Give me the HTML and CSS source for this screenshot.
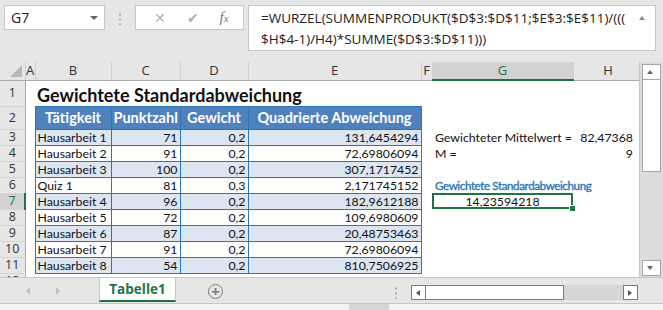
FILE: index.html
```html
<!DOCTYPE html>
<html lang="de">
  <head>
    <meta charset="UTF-8" />
    <title>Gewichtete Standardabweichung</title>
    <link rel="stylesheet" href="styles.css">
  </head>
  <body>
    <div class="topbar">
      <div class="namebox">
        <span>G7</span>
        <span class="caret"></span>
      </div>
      <div class="grip"></div>
      <div class="fxbox">
        <span class="fx-btn">&#x2715;</span>
        <span class="fx-btn">&#x2714;</span>
        <span class="fx-btn fx"><i>f</i><i class="x">x</i></span>
      </div>
      <div class="formula">
        <div class="formula-text">=WURZEL(SUMMENPRODUKT($D$3:$D$11;$E$3:$E$11)/(((<br>$H$4-1)/H4)*SUMME($D$3:$D$11)))</div>
        <span class="formula-up"></span>
      </div>
    </div>

    <div class="sheetwrap">
      <div class="sheet">
        <table class="grid">
          <colgroup>
            <col style="width:25px"><col style="width:10px"><col style="width:76px"><col style="width:69px">
            <col style="width:68px"><col style="width:173px"><col style="width:11px"><col style="width:141px"><col style="width:70px">
          </colgroup>
          <tr class="hdr">
            <th class="corner"><span class="tri"></span></th>
            <th>A</th><th>B</th><th>C</th><th>D</th><th>E</th><th>F</th><th class="sel">G</th><th>H</th>
          </tr>
          <tr class="r1">
            <th class="rh">1</th><td></td>
            <td colspan="4" class="title">Gewichtete Standardabweichung</td>
            <td></td><td></td><td></td>
          </tr>
          <tr class="r2">
            <th class="rh">2</th><td></td>
            <td class="tb th-c">Tätigkeit</td><td class="tb th-c">Punktzahl</td><td class="tb th-c">Gewicht</td><td class="tb th-c">Quadrierte Abweichung</td>
            <td></td><td></td><td></td>
          </tr>
          <tr>
            <th class="rh">3</th><td></td>
            <td class="tb band">Hausarbeit 1</td><td class="tb band num">71</td><td class="tb band num">0,2</td><td class="tb band num">131,6454294</td>
            <td></td><td class="side">Gewichteter Mittelwert =</td><td class="num hcol">82,47368</td>
          </tr>
          <tr>
            <th class="rh">4</th><td></td>
            <td class="tb">Hausarbeit 2</td><td class="tb num">91</td><td class="tb num">0,2</td><td class="tb num">72,69806094</td>
            <td></td><td class="side">M =</td><td class="num hcol">9</td>
          </tr>
          <tr>
            <th class="rh">5</th><td></td>
            <td class="tb band">Hausarbeit 3</td><td class="tb band num">100</td><td class="tb band num">0,2</td><td class="tb band num">307,1717452</td>
            <td></td><td></td><td></td>
          </tr>
          <tr>
            <th class="rh">6</th><td></td>
            <td class="tb">Quiz 1</td><td class="tb num">81</td><td class="tb num">0,3</td><td class="tb num">2,171745152</td>
            <td></td><td colspan="2" class="side label">Gewichtete Standardabweichung</td>
          </tr>
          <tr>
            <th class="rh rsel">7</th><td></td>
            <td class="tb band">Hausarbeit 4</td><td class="tb band num">96</td><td class="tb band num">0,2</td><td class="tb band num">182,9612188</td>
            <td></td><td class="active">14,23594218<span class="handle"></span></td><td></td>
          </tr>
          <tr>
            <th class="rh">8</th><td></td>
            <td class="tb">Hausarbeit 5</td><td class="tb num">72</td><td class="tb num">0,2</td><td class="tb num">109,6980609</td>
            <td></td><td></td><td></td>
          </tr>
          <tr>
            <th class="rh">9</th><td></td>
            <td class="tb band">Hausarbeit 6</td><td class="tb band num">87</td><td class="tb band num">0,2</td><td class="tb band num">20,48753463</td>
            <td></td><td></td><td></td>
          </tr>
          <tr>
            <th class="rh">10</th><td></td>
            <td class="tb">Hausarbeit 7</td><td class="tb num">91</td><td class="tb num">0,2</td><td class="tb num">72,69806094</td>
            <td></td><td></td><td></td>
          </tr>
          <tr>
            <th class="rh">11</th><td></td>
            <td class="tb band">Hausarbeit 8</td><td class="tb band num">54</td><td class="tb band num">0,2</td><td class="tb band num">810,7506925</td>
            <td></td><td></td><td></td>
          </tr>
          <tr>
            <th class="rh">12</th><td></td><td></td><td></td><td></td><td></td><td></td><td></td><td></td>
          </tr>
        </table>
      </div>
      <div class="vscroll">
        <span class="sbtn up"></span>
        <span class="vthumb"></span>
        <span class="vtrack"></span>
        <span class="sbtn down"></span>
      </div>
    </div>

    <div class="tabbar">
      <span class="nav left"></span>
      <span class="nav right"></span>
      <div class="tab">Tabelle1</div>
      <span class="addsheet">+</span>
      <div class="grip hgrip"></div>
      <div class="hscroll">
        <span class="hbtn hl"></span>
        <span class="hthumb"></span>
        <span class="htrack"></span>
        <span class="hbtn hr"></span>
      </div>
    </div>
    <div class="status"><span class="status-mark"></span></div>
  </body>
</html>
```

FILE: styles.css
```css
body {
  margin: 0;
  width: 663px;
  height: 310px;
  overflow: hidden;
  background: #e6e6e6;
  font-family: "Open Sans", sans-serif;
  color: #222;
}

/* formula bar */
.topbar {
  display: flex;
  align-items: flex-start;
  height: 62px;
  padding: 5px 0 0 4px;
  box-sizing: border-box;
}
.namebox {
  width: 101px;
  height: 25px;
  box-sizing: border-box;
  background: #fff;
  border: 1px solid #c6c6c6;
  display: flex;
  align-items: center;
  justify-content: space-between;
  padding: 0 6px 0 6px;
  font-size: 14px;
}
.caret {
  width: 0;
  height: 0;
  border-left: 4px solid transparent;
  border-right: 4px solid transparent;
  border-top: 4px solid #666;
}
.grip {
  width: 2px;
  height: 13px;
  margin: 7px 14px 0 14px;
  background: radial-gradient(circle, #a8a8a8 1px, transparent 1.2px) 0 0 / 2px 5px repeat-y;
}
.fxbox {
  width: 109px;
  height: 25px;
  box-sizing: border-box;
  background: #fff;
  border: 1px solid #c6c6c6;
  display: flex;
  align-items: center;
  justify-content: space-around;
  padding: 0 4px 0 8px;
  color: #b0b0b0;
  font-size: 14px;
}
.fx {
  color: #777;
  font-family: "Liberation Serif", serif;
  font-size: 15px;
}
.fx .x { font-size: 11px; }
.formula {
  margin-left: 4px;
  width: 408px;
  height: 46px;
  box-sizing: border-box;
  background: #fff;
  border: 1px solid #c6c6c6;
  display: flex;
  justify-content: space-between;
  padding: 2px 10px 0 12px;
}
.formula-text {
  font-size: 13.5px;
  line-height: 21px;
  color: #222;
}
.formula-up {
  margin-top: 8px;
  width: 0;
  height: 0;
  border-left: 3px solid transparent;
  border-right: 3px solid transparent;
  border-bottom: 4px solid #888;
}

/* sheet */
.sheetwrap {
  display: flex;
  height: 216px;
  border-bottom: 1px solid #c6c6c6;
  box-sizing: border-box;
}
.sheet {
  width: 643px;
  overflow: hidden;
  background: #fff;
  border-right: 1px solid #c6c6c6;
}
.grid {
  table-layout: fixed;
  border-collapse: collapse;
  width: 643px;
  font-family: Lato, "Liberation Sans", sans-serif;
  font-size: 12.3px;
  color: #111;
}
.grid tr {
  height: 16px;
}
.grid td, .grid th {
  padding: 0 2px;
  white-space: nowrap;
  line-height: 13px;
  overflow: visible;
}
.grid tr.hdr { height: 18px; }
.grid tr.r1 { height: 26px; }
.grid tr.r2 { height: 23px; }
.hdr th {
  background: #e6e6e6;
  font-family: "Open Sans", sans-serif;
  font-weight: normal;
  font-size: 13px;
  color: #333;
  border-right: 1px solid #d0d0d0;
  border-bottom: 1px solid #ababab;
  padding: 0;
}
.hdr th.sel {
  background: #d2d2d2;
  color: #217346;
  border-bottom: 2px solid #217346;
}
.corner {
  position: relative;
}
.tri {
  position: absolute;
  right: 3px;
  bottom: 3px;
  width: 0;
  height: 0;
  border-left: 12px solid transparent;
  border-bottom: 12px solid #b8b8b8;
}
.grid th.rh {
  background: #e6e6e6;
  font-family: "Open Sans", sans-serif;
  font-weight: normal;
  font-size: 12.5px;
  line-height: 12px;
  color: #333;
  border-right: 1px solid #ababab;
  border-bottom: 1px solid #d4d4d4;
  text-align: center;
  padding: 0;
}
.grid th.rsel {
  background: #d2d2d2;
  color: #217346;
  border-right: 2px solid #217346;
}
.title {
  font-weight: bold;
  font-size: 18px;
  vertical-align: bottom;
}
.grid .title {
  line-height: 20px;
  padding-bottom: 1px;
}
.tb {
  border: 1px solid #2e75b6;
}
.th-c {
  background: #4f81bd;
  color: #fff;
  font-weight: bold;
  font-size: 14.5px;
  text-align: center;
}
.band {
  background: #dce6f1;
}
.num {
  text-align: right;
}
.grid td.side {
  padding-left: 3px;
}
.grid td.hcol {
  padding-right: 10px;
}
.grid td.label {
  color: #2e75b6;
  font-size: 11.6px;
  letter-spacing: -0.4px;
  -webkit-text-stroke: 0.35px #2e75b6;
}
.active {
  position: relative;
  text-align: center;
  outline: 2px solid #217346;
  outline-offset: -2px;
}
.handle {
  position: absolute;
  right: -3px;
  bottom: -3px;
  width: 5px;
  height: 5px;
  background: #217346;
  border: 1px solid #fff;
}

/* vertical scrollbar */
.vscroll {
  width: 19px;
  display: flex;
  flex-direction: column;
  padding: 2px 2px 1px 2px;
  background: #dcdcdc;
}
.sbtn {
  height: 14px;
  background: #fff;
  border: 1px solid #a6a6a6;
  position: relative;
}
.sbtn::after {
  content: "";
  position: absolute;
  left: 4px;
  top: 5px;
  border-left: 3px solid transparent;
  border-right: 3px solid transparent;
}
.up::after { border-bottom: 4px solid #666; }
.down::after { border-top: 4px solid #666; }
.vthumb {
  height: 91px;
  background: #fff;
  border: 1px solid #a6a6a6;
  border-top: 0;
}
.vtrack { flex: 1; }

/* tabs */
.tabbar {
  display: flex;
  align-items: flex-start;
  height: 25px;
  position: relative;
}
.nav {
  width: 0;
  height: 0;
  margin-top: 9px;
  border-top: 4px solid transparent;
  border-bottom: 4px solid transparent;
}
.nav.left { margin-left: 26px; border-right: 4px solid #c0c0c0; }
.nav.right { margin-left: 26px; border-left: 4px solid #c0c0c0; }
.tab {
  margin-left: 39px;
  width: 75px;
  height: 22px;
  background: #fff;
  border: 1px solid #c6c6c6;
  border-top: 0;
  border-bottom: 2px solid #217346;
  text-align: center;
  font-weight: bold;
  font-size: 13.5px;
  line-height: 23px;
  color: #217346;
}
.addsheet {
  margin: 6px 0 0 32px;
  width: 13px;
  height: 13px;
  border: 1.5px solid #7b7b7b;
  border-radius: 50%;
  color: #7b7b7b;
  font-size: 15px;
  line-height: 12px;
  text-align: center;
  font-weight: bold;
}
.hgrip {
  margin: 8px 14px 0 172px;
}
.hscroll {
  display: flex;
  margin-top: 7px;
  height: 15px;
  width: 227px;
  background: #d6d6d6;
}
.hbtn {
  width: 13px;
  background: #fff;
  border: 1px solid #7a7a7a;
  position: relative;
}
.hbtn::after {
  content: "";
  position: absolute;
  top: 4px;
  left: 4px;
  border-top: 3.5px solid transparent;
  border-bottom: 3.5px solid transparent;
}
.hl::after { border-right: 4px solid #555; }
.hr::after { border-left: 4px solid #555; }
.hthumb {
  width: 137px;
  background: #fff;
  border: 1px solid #7a7a7a;
  border-left: 0;
}
.htrack { flex: 1; }

.status {
  height: 7px;
  background: #f3f3f3;
  border-top: 1px solid #c6c6c6;
}
.status-mark {
  display: block;
  margin-left: 349px;
  width: 40px;
  height: 7px;
  background: #d4d4d4;
}
```
